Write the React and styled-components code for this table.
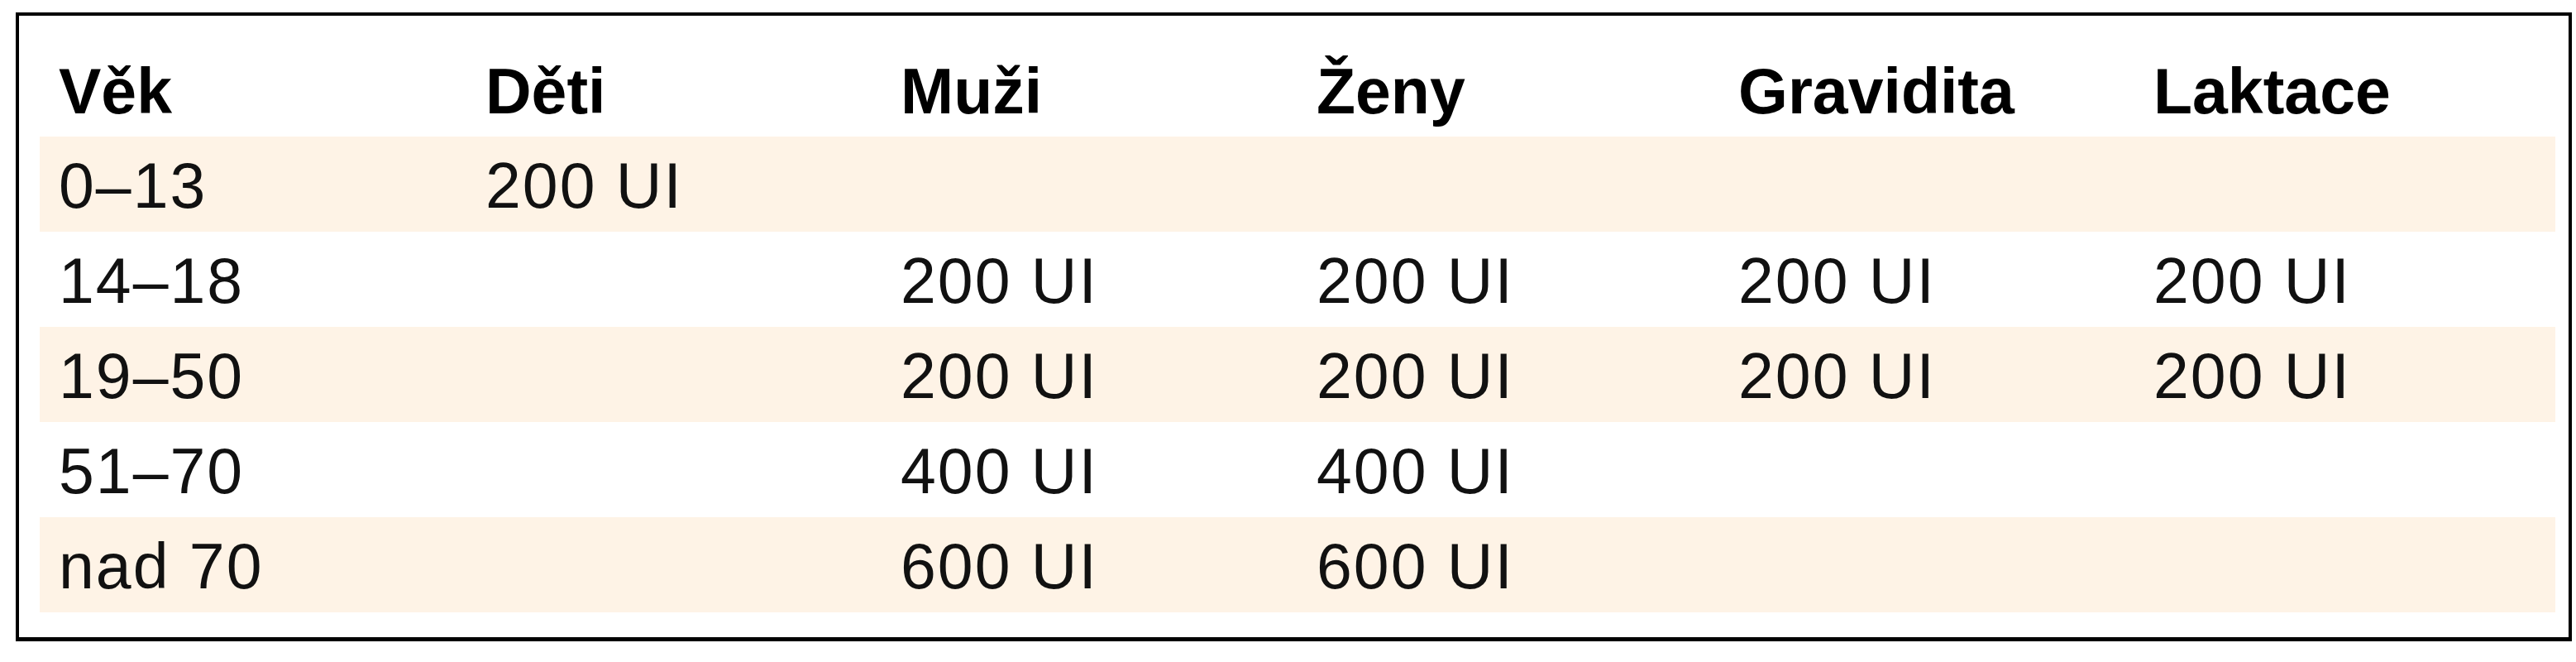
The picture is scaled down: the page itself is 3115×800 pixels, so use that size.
import React from "react";
import styled, { createGlobalStyle } from "styled-components";

const Global = createGlobalStyle`
  html, body {
    margin: 0;
    padding: 0;
    background: #ffffff;
  }
  body {
    font-family: "Liberation Sans", Arial, sans-serif;
    color: #0d0d0d;
  }
`;

const Frame = styled.div`
  box-sizing: border-box;
  margin: 15px 0 0 19px;
  width: 3091px;
  border: 4px solid #000;
  border-bottom-width: 5px;
  background: #fff;
  padding: 0 16px 30px 25px;
`;

const Row = styled.div`
  display: grid;
  grid-template-columns: 516px 502px 503px 510px 502px 1fr;
  background: ${(p) => (p.$shaded ? "#fef3e6" : "transparent")};
  height: ${(p) => (p.$head ? "146px" : "115px")};
  box-sizing: border-box;
  padding: ${(p) => (p.$head ? "47px 0 11px" : "15px 0 12px")};
`;

const Cell = styled.div`
  font-size: 77px;
  line-height: 88px;
  font-weight: ${(p) => (p.$head ? 700 : 400)};
  letter-spacing: ${(p) => (p.$head ? "0" : "2px")};
  padding-left: 23px;
  white-space: nowrap;
  color: ${(p) => (p.$head ? "#000" : "#111")};
`;

const headers = ["Věk", "Děti", "Muži", "Ženy", "Gravidita", "Laktace"];
const rows = [
  ["0–13", "200 UI", "", "", "", ""],
  ["14–18", "", "200 UI", "200 UI", "200 UI", "200 UI"],
  ["19–50", "", "200 UI", "200 UI", "200 UI", "200 UI"],
  ["51–70", "", "400 UI", "400 UI", "", ""],
  ["nad 70", "", "600 UI", "600 UI", "", ""],
];

export default function App() {
  return (
    <>
      <Global />
      <Frame>
        <Row $head>
          {headers.map((h) => (
            <Cell key={h} $head>
              {h}
            </Cell>
          ))}
        </Row>
        {rows.map((r, i) => (
          <Row key={i} $shaded={i % 2 === 0}>
            {r.map((c, j) => (
              <Cell key={j}>{c}</Cell>
            ))}
          </Row>
        ))}
      </Frame>
    </>
  );
}
